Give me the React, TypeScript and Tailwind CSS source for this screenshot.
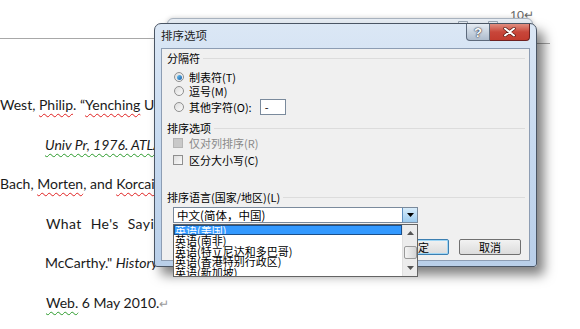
import { ReactNode } from 'react';

const cjk = { fontFamily: '"Noto Sans CJK SC", "Liberation Sans", sans-serif' };
const doc = { fontFamily: 'Lato, "Open Sans", sans-serif' };

const red = 'underline decoration-wavy decoration-[#e02020] decoration-1 underline-offset-[3px]';
const green = 'underline decoration-wavy decoration-[#2a9a2a] decoration-1 underline-offset-[3px]';

const Radio = ({ checked = false }: { checked?: boolean }) => (
  <span className="w-[10px] h-[10px] rounded-full border border-[#8f8f8f] bg-gradient-to-br from-[#dcdcdc] to-[#fbfbfb] flex items-center justify-center shrink-0">
    {checked && <span className="w-[5px] h-[5px] rounded-full bg-gradient-to-br from-[#6ec4f0] to-[#1a5fa8]" />}
  </span>
);

const Check = ({ disabled = false }: { disabled?: boolean }) => (
  <span
    className={`w-[10px] h-[10px] border shrink-0 ${
      disabled ? 'border-[#b5b5b5] bg-[#c9c9c9]' : 'border-[#8f8f8f] bg-gradient-to-br from-[#dedede] to-[#fbfbfb]'
    }`}
  />
);

const GroupLabel = ({ children, className = '' }: { children: ReactNode; className?: string }) => (
  <div className={`flex items-center h-[14px] pl-[5px] pr-[4px] gap-[3px] ${className}`}>
    <span className="whitespace-nowrap">{children}</span>
    <span className="flex-1 h-px bg-[#dcdcdc]" />
  </div>
);

const languages = ['英语(美国)', '英语(南非)', '英语(特立尼达和多巴哥)', '英语(香港特别行政区)', '英语(新加坡)'];

export default function App() {
  return (
    <div className="relative w-[580px] h-[329px] overflow-hidden bg-white" style={doc}>
      {/* page header */}
      <div className="flex items-start">
        <div className="w-[160px] h-[39px] border-b border-[#a8a8a8]" />
        <div className="flex-1" />
        <div className="w-[93px] h-[44px] mr-[30px] border-b border-[#a8a8a8] flex justify-end items-start pt-[9px] pr-[16px] text-[12px] text-[#666] leading-none">
          10↵
        </div>
      </div>

      {/* document text, the rest of each line sits under the dialog */}
      <div className="mt-[41px] w-[176px] overflow-hidden text-[14px] leading-[39.5px] text-[#1a1a1a] whitespace-nowrap">
        <div>
          West, <span className={red}>Philip</span>. “<span className={red}>Yenching</span> University
        </div>
        <div className="pl-[45px] italic">
          <span className={green}>Univ Pr, 1976. ATLA</span>
        </div>
        <div>
          Bach, <span className={red}>Morten</span>, and <span className={red}>Korcaighe</span>
        </div>
        <div className="pl-[46px] tracking-[0.4px] [word-spacing:5px]">What He's Saying</div>
        <div className="pl-[45px]">
          McCarthy." <span className="italic">History</span>
        </div>
        <div className="pl-[46px]">
          <span className={green}>Web.</span> 6 May 2010.<span className="text-[#9a9a9a] text-[12px]">↵</span>
        </div>
      </div>

      {/* window behind */}
      <div className="absolute left-[167px] top-[18px] w-[366px] h-[60px] rounded-t-[6px] border border-[#a9b3bf] bg-[#e8eef5] shadow-[0_0_5px_rgba(0,0,0,0.2)]">
        <div className="absolute right-[64px] top-[2px] w-[10px] h-[6px] border border-[#9aa6b4] rounded-b-[2px]" />
        <div className="absolute right-[34px] top-[2px] w-[10px] h-[6px] border border-[#9aa6b4] rounded-b-[2px]" />
      </div>

      {/* dialog */}
      <div
        className="absolute left-[154px] top-[23px] w-[383px] h-[244px] rounded-t-[7px] rounded-b-[3px] border border-[#4a5564] bg-gradient-to-b from-[#dbe7f5] via-[#c7daf0] to-[#b9cfe9] shadow-[7px_8px_12px_rgba(0,0,0,0.5)] flex flex-col text-[11px] text-black"
        style={cjk}
      >
        {/* title bar */}
        <div className="h-[24px] flex items-start shrink-0">
          <span className="pl-[6px] pt-[4px] text-[11.5px] leading-[14px] text-[#1c1c1c]">排序选项</span>
          <div className="flex-1" />
          <div className="flex mr-[6px]">
            <div
              className="w-[24px] h-[17px] border border-[#5d6a7c] border-t-0 rounded-bl-[4px] bg-gradient-to-b from-[#e4ebf3] to-[#aebccd] flex items-center justify-center text-[13px] font-bold text-white leading-none [text-shadow:0_0_1px_#223,0_0_2px_#223]"
              style={{ fontFamily: '"Liberation Sans", sans-serif' }}
            >
              ?
            </div>
            <div className="w-[40px] h-[17px] border border-[#6e2020] border-t-0 border-l-0 rounded-br-[4px] bg-gradient-to-b from-[#e08d80] via-[#c8463a] to-[#c23b2e] flex items-center justify-center">
              <svg width="13" height="10" viewBox="0 0 13 10">
                <path d="M2 1.5 L11 8.5 M11 1.5 L2 8.5" stroke="#5a1a14" strokeWidth="3.4" strokeLinecap="round" />
                <path d="M2 1.5 L11 8.5 M11 1.5 L2 8.5" stroke="#ffffff" strokeWidth="2" strokeLinecap="round" />
              </svg>
            </div>
          </div>
        </div>

        {/* client area */}
        <div className="flex-1 mx-[6px] mb-[5px] border border-[#8d9db3] bg-[#f0f0f0] flex flex-col leading-[14px]">
          <GroupLabel className="mt-[2px]">分隔符</GroupLabel>
          <div className="mt-[5px] h-[14px] flex items-center pl-[12px] gap-[5px]">
            <Radio checked />
            <span>制表符(T)</span>
          </div>
          <div className="h-[14px] flex items-center pl-[12px] gap-[5px]">
            <Radio />
            <span>逗号(M)</span>
          </div>
          <div className="mt-[1px] h-[16px] flex items-center pl-[12px] gap-[5px]">
            <Radio />
            <span>其他字符(O):</span>
            <span className="ml-[3px] w-[26px] h-[16px] border border-[#7a8a9c] bg-white flex items-center pl-[4px] text-[11px]">-</span>
          </div>

          <GroupLabel className="mt-[6px]">排序选项</GroupLabel>
          <div className="mt-[1px] h-[14px] flex items-center pl-[11px] gap-[6px] text-[#8a8a8a]">
            <Check disabled />
            <span>仅对列排序(R)</span>
          </div>
          <div className="mt-[3px] h-[14px] flex items-center pl-[11px] gap-[6px]">
            <Check />
            <span>区分大小写(C)</span>
          </div>

          <GroupLabel className="mt-[23px]">排序语言(国家/地区)(L)</GroupLabel>
          <div className="mt-[3px] ml-[11px] w-[245px] h-[16px] border border-[#7a8a9c] bg-white flex items-center">
            <span className="flex-1 pl-[3px] text-[11.5px]">中文(简体，中国)</span>
            <span className="w-[15px] h-[14px] border-l border-[#5f8fc0] bg-gradient-to-b from-[#d8ecfa] to-[#9ccbef] flex items-center justify-center">
              <svg width="7" height="4" viewBox="0 0 7 4">
                <path d="M0 0 H7 L3.5 4 Z" fill="#000" />
              </svg>
            </span>
          </div>

          <div className="mt-[16px] mr-[8px] flex justify-end gap-[10px]">
            <button className="w-[62px] h-[16px] rounded-[2px] border border-[#3c7fb1] bg-gradient-to-b from-[#f2f2f2] to-[#dcdcdc] shadow-[inset_0_0_0_1px_#9fd6f5] text-[11px] leading-none">
              确定
            </button>
            <button className="w-[62px] h-[16px] rounded-[2px] border border-[#707070] bg-gradient-to-b from-[#f2f2f2] to-[#dcdcdc] text-[11px] leading-none">
              取消
            </button>
          </div>
        </div>
      </div>

      {/* open dropdown list */}
      <div
        className="absolute left-[173px] top-[224px] w-[245px] h-[53px] border border-[#646464] bg-white flex text-[11px] leading-[10.4px] overflow-hidden"
        style={cjk}
      >
        <div className="flex-1 flex flex-col">
          {languages.map((l, i) => (
            <div
              key={l}
              className={`h-[10.4px] shrink-0 pl-[1px] whitespace-nowrap ${
                i === 0 ? 'bg-[#3399ff] text-white outline outline-1 -outline-offset-1 outline-[#1b4f8a]' : 'text-black'
              }`}
            >
              {l}
            </div>
          ))}
        </div>
        <div className="w-[15px] bg-[#ececec] border-l border-[#e0e0e0] flex flex-col items-center">
          <svg width="7" height="4" viewBox="0 0 7 4" className="mt-[6px]">
            <path d="M0 4 H7 L3.5 0 Z" fill="#555" />
          </svg>
          <div className="mt-[11px] w-[13px] h-[13px] border border-[#9a9a9a] rounded-[2px] bg-gradient-to-r from-[#f4f4f4] to-[#d6d6d6]" />
          <svg width="7" height="4" viewBox="0 0 7 4" className="mt-[7px]">
            <path d="M0 0 H7 L3.5 4 Z" fill="#555" />
          </svg>
        </div>
      </div>
    </div>
  );
}
